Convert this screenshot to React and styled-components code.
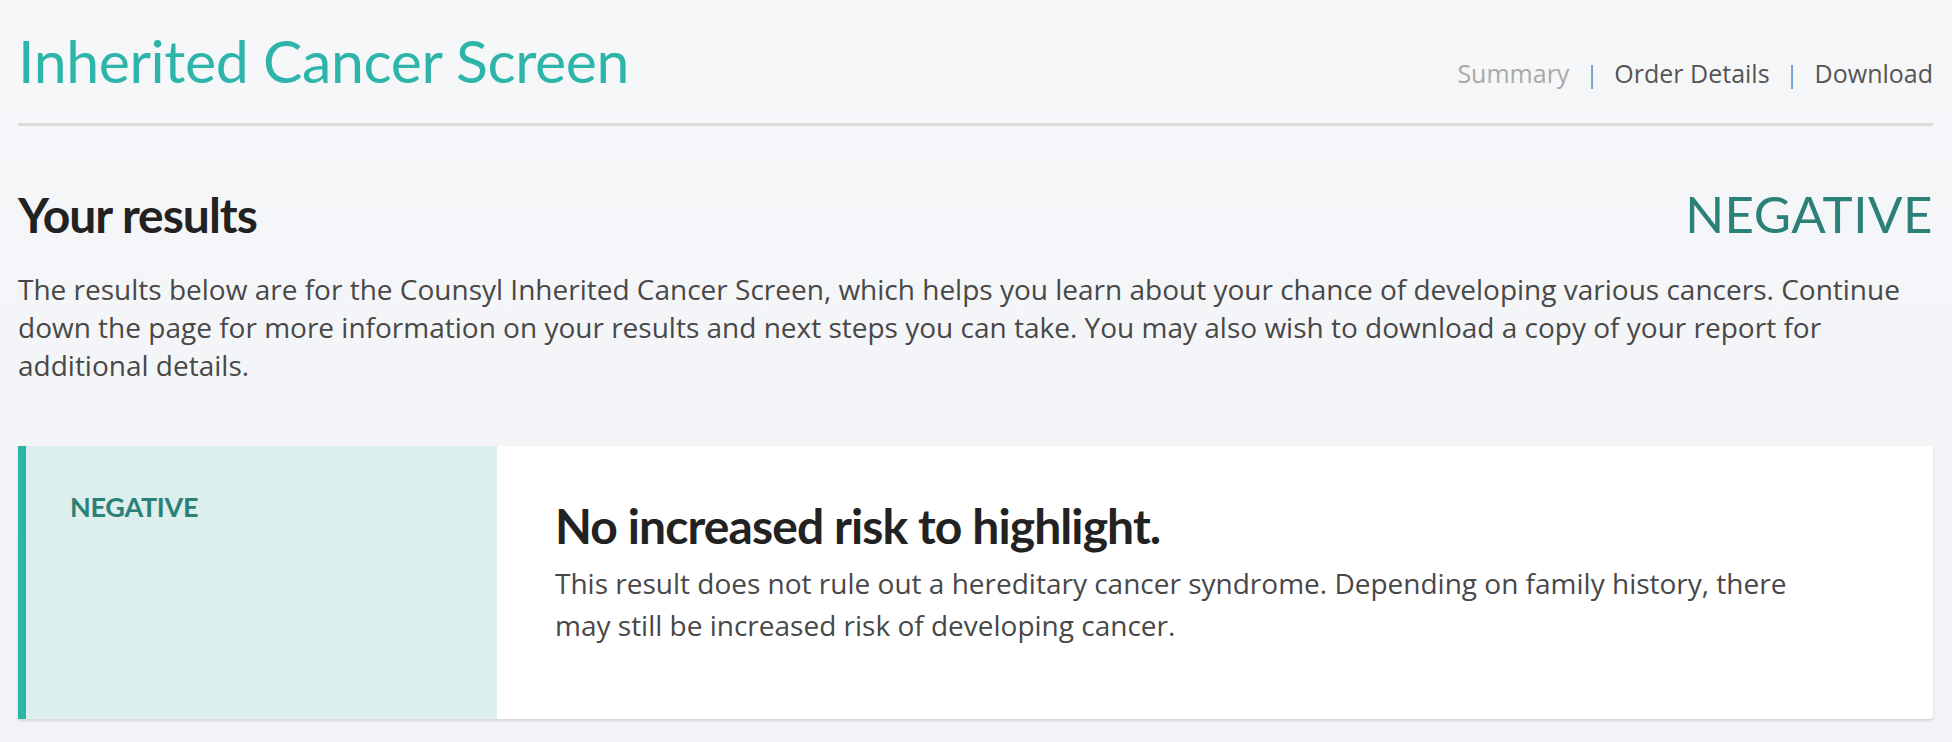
import React from "react";
import styled, { createGlobalStyle } from "styled-components";

const GlobalStyle = createGlobalStyle`
  html, body {
    margin: 0;
    padding: 0;
    background: #f4f6f8;
  }
  body {
    font-family: "Open Sans", "Noto Sans", sans-serif;
    color: #484848;
  }
  * { box-sizing: border-box; }
`;

const Page = styled.div`
  padding: 0 19px 24px 18px;
  background: linear-gradient(180deg, #f6f7f9 0%, #f1f3f6 100%);
  min-height: 742px;
`;

const Header = styled.header`
  display: flex;
  justify-content: space-between;
  align-items: baseline;
  padding: 26px 0 27px;
  border-bottom: 3px solid #dcdcdc;
`;

const Title = styled.h1`
  margin: 0;
  font-family: "Lato", sans-serif;
  font-weight: 400;
  font-size: 59px;
  line-height: 70px;
  color: #2eb5aa;
  letter-spacing: -0.4px;
`;

const Nav = styled.nav`
  display: flex;
  align-items: baseline;
  gap: 16px;
  font-size: 25px;
  line-height: 30px;
`;

const NavLink = styled.a`
  color: ${(p) => (p.$active ? "#a9a9a9" : "#555555")};
  text-decoration: none;
`;

const NavSep = styled.span`
  color: #555;
  font-size: 24px;
  font-weight: 300;
`;

const ResultsRow = styled.div`
  display: flex;
  justify-content: space-between;
  align-items: baseline;
  margin-top: 59px;
`;

const SectionTitle = styled.h2`
  margin: 0;
  font-family: "Lato", sans-serif;
  font-weight: 700;
  font-size: 48px;
  line-height: 58px;
  color: #222222;
  letter-spacing: -1px;
`;

const Status = styled.div`
  font-family: "Lato", sans-serif;
  font-weight: 400;
  font-size: 51px;
  line-height: 58px;
  color: #2b8077;
  letter-spacing: 0.5px;
`;

const Intro = styled.p`
  margin: 26px 0 0;
  font-size: 28px;
  line-height: 38px;
  color: #484848;
`;

const Card = styled.section`
  display: flex;
  margin-top: 62px;
  height: 273px;
  background: #ffffff;
  border-radius: 0 4px 4px 0;
  box-shadow: 0 2px 3px rgba(0, 0, 0, 0.12);
  overflow: hidden;
`;

const Side = styled.div`
  flex: 0 0 479px;
  background: #ddefec;
  border-left: 8px solid #2bb5a9;
  padding: 44px 44px;
`;

const SideLabel = styled.div`
  font-family: "Lato", sans-serif;
  font-weight: 700;
  font-size: 27px;
  line-height: 34px;
  color: #2b8077;
  letter-spacing: -0.3px;
`;

const Body = styled.div`
  flex: 1;
  padding: 49px 58px;
`;

const CardHeading = styled.h3`
  margin: 0;
  font-family: "Lato", sans-serif;
  font-weight: 700;
  font-size: 48px;
  line-height: 62px;
  color: #222222;
  letter-spacing: -0.9px;
`;

const CardText = styled.p`
  margin: 5px 0 0;
  max-width: 1260px;
  font-size: 28px;
  line-height: 42px;
  color: #484848;
`;

export default function App() {
  return (
    <>
      <GlobalStyle />
      <Page>
        <Header>
          <Title>Inherited Cancer Screen</Title>
          <Nav>
            <NavLink $active href="#">Summary</NavLink>
            <NavSep>|</NavSep>
            <NavLink href="#">Order Details</NavLink>
            <NavSep>|</NavSep>
            <NavLink href="#">Download</NavLink>
          </Nav>
        </Header>
        <ResultsRow>
          <SectionTitle>Your results</SectionTitle>
          <Status>NEGATIVE</Status>
        </ResultsRow>
        <Intro>
          The results below are for the Counsyl Inherited Cancer Screen, which helps you learn
          about your chance of developing various cancers. Continue down the page for more
          information on your results and next steps you can take. You may also wish to download
          a copy of your report for additional details.
        </Intro>
        <Card>
          <Side>
            <SideLabel>NEGATIVE</SideLabel>
          </Side>
          <Body>
            <CardHeading>No increased risk to highlight.</CardHeading>
            <CardText>
              This result does not rule out a hereditary cancer syndrome. Depending on family
              history, there may still be increased risk of developing cancer.
            </CardText>
          </Body>
        </Card>
      </Page>
    </>
  );
}
